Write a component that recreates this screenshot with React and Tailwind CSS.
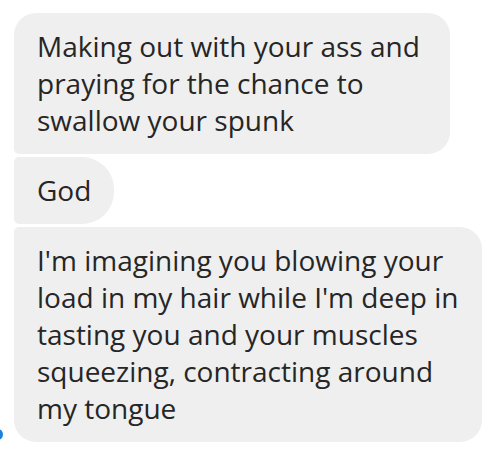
export default function App() {
  const bubble =
    "w-fit bg-[#efefef] text-[#262626] px-[23px] py-[15px] text-[28px] leading-[37px]";

  return (
    <div
      className="relative w-[500px] h-[460px] bg-white overflow-hidden"
      style={{ fontFamily: '"Open Sans", "Liberation Sans", Arial, sans-serif' }}
    >
      <div className="flex flex-col gap-[3px] pl-[14px] pt-[13px]">
        <div className={`${bubble} pr-[30px] rounded-[22px] rounded-bl-[5px]`}>
          Making out with your ass and
          <br />
          praying for the chance to
          <br />
          swallow your spunk
        </div>
        <div className={`${bubble} rounded-r-[32px] rounded-l-[5px] py-[12px]`}>God</div>
        <div className={`${bubble} rounded-[22px] rounded-tl-[5px]`}>
          I'm imagining you blowing your
          <br />
          load in my hair while I'm deep in
          <br />
          tasting you and your muscles
          <br />
          squeezing, contracting around
          <br />
          my tongue
        </div>
      </div>
      {/* read receipt, mostly cut off */}
      <div className="absolute left-[-8px] top-[429px] w-[11px] h-[11px] rounded-full bg-[#1a7fe0]" />
    </div>
  );
}
